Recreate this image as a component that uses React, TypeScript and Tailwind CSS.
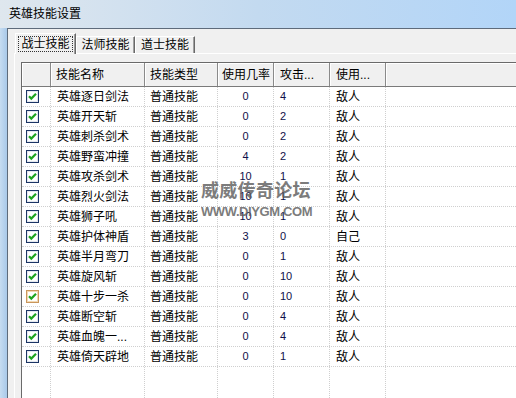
import React from "react";

type Row = {
  name: string;
  type: string;
  rate: string;
  atk: string;
  target: string;
  hot?: boolean;
};

const rows: Row[] = [
  { name: "英雄逐日剑法", type: "普通技能", rate: "0", atk: "4", target: "敌人" },
  { name: "英雄开天斩", type: "普通技能", rate: "0", atk: "2", target: "敌人" },
  { name: "英雄刺杀剑术", type: "普通技能", rate: "0", atk: "2", target: "敌人" },
  { name: "英雄野蛮冲撞", type: "普通技能", rate: "4", atk: "2", target: "敌人" },
  { name: "英雄攻杀剑术", type: "普通技能", rate: "10", atk: "1", target: "敌人" },
  { name: "英雄烈火剑法", type: "普通技能", rate: "10", atk: "1", target: "敌人" },
  { name: "英雄狮子吼", type: "普通技能", rate: "10", atk: "1", target: "敌人" },
  { name: "英雄护体神盾", type: "普通技能", rate: "3", atk: "0", target: "自己" },
  { name: "英雄半月弯刀", type: "普通技能", rate: "0", atk: "1", target: "敌人" },
  { name: "英雄旋风斩", type: "普通技能", rate: "0", atk: "10", target: "敌人" },
  { name: "英雄十步一杀", type: "普通技能", rate: "0", atk: "10", target: "敌人", hot: true },
  { name: "英雄断空斩", type: "普通技能", rate: "0", atk: "4", target: "敌人" },
  { name: "英雄血魄一...", type: "普通技能", rate: "0", atk: "4", target: "敌人" },
  { name: "英雄倚天辟地", type: "普通技能", rate: "0", atk: "1", target: "敌人" },
];

function CheckBox({ hot }: { hot?: boolean }) {
  return (
    <svg width="13" height="13" viewBox="0 0 13 13" className="shrink-0">
      <rect x="0.5" y="0.5" width="12" height="12" fill="#fff" stroke={hot ? "#c9965c" : "#1c3565"} />
      <rect x="1.5" y="1.5" width="10" height="10" fill="none" stroke={hot ? "#f3d9b2" : "#e4e8ef"} />
      <polyline points="3,6.2 5.3,8.6 10,3.8" fill="none" stroke="#1fa51f" strokeWidth="2.2" />
    </svg>
  );
}

const headerCell =
  "h-full flex items-center border-r border-[#8a8a8a] shadow-[inset_1px_1px_0_#ffffff] bg-[#f0f0f0] overflow-hidden whitespace-nowrap";
const cell = "h-full flex items-center border-r border-dotted border-[#cfcfcf] overflow-hidden whitespace-nowrap";

export default function App() {
  return (
    <div className="relative w-[516px] h-[398px] overflow-hidden flex flex-col bg-[#b8d5f0] font-['Liberation_Sans','Noto_Sans_CJK_SC',sans-serif] text-[12px] text-black">
      {/* title bar */}
      <div className="h-[28px] shrink-0 flex items-center pl-[9px] bg-gradient-to-r from-[#dfe7ee] via-[#c3daf0] to-[#b2d5f8]">
        <span className="leading-none">英雄技能设置</span>
      </div>

      <div className="flex flex-1 min-h-0">
        <div className="w-[7px] shrink-0 bg-gradient-to-r from-[#c6dcf1] to-[#a9c9e9]" />
        <div className="flex-1 flex flex-col min-h-0 bg-[#f0f0f0] border-l border-t border-[#5e6b7b]">
          {/* tabs */}
          <div className="h-[24px] shrink-0 flex items-end pl-[7px] pt-[4px]">
            <div className="relative z-10 -mb-px h-[21px] w-[61px] bg-[#f0f0f0] border-t border-l border-white border-r border-r-[#696969] shadow-[inset_-1px_0_0_#a0a0a0] flex items-center justify-center">
              <span className="px-[2px] py-[1px] leading-none outline outline-1 outline-dotted outline-[#333]">战士技能</span>
            </div>
            <div className="h-[17px] w-[59px] border-t border-l border-white border-r border-r-[#696969] shadow-[inset_-1px_0_0_#a0a0a0] flex items-center justify-center">
              <span className="leading-none">法师技能</span>
            </div>
            <div className="h-[17px] w-[60px] border-t border-l border-white border-r border-r-[#696969] shadow-[inset_-1px_0_0_#a0a0a0] flex items-center justify-center">
              <span className="leading-none">道士技能</span>
            </div>
          </div>

          {/* pane */}
          <div className="flex-1 min-h-0 ml-[6px] border-l border-t border-white pt-[8px] pl-[6px] flex flex-col">
            <div className="flex-1 min-h-0 flex flex-col bg-white border-l border-t border-[#6a6a6a]">
              {/* header */}
              <div className="h-[24px] shrink-0 flex border-b border-[#7a7a7a]">
                <div className={`${headerCell} w-[29px]`} />
                <div className={`${headerCell} w-[94px] pl-[5px]`}>技能名称</div>
                <div className={`${headerCell} w-[73px] pl-[5px]`}>技能类型</div>
                <div className={`${headerCell} w-[56px] pl-[4px]`}>使用几率</div>
                <div className={`${headerCell} w-[56px] pl-[6px]`}>攻击...</div>
                <div className={`${headerCell} w-[56px] pl-[6px]`}>使用...</div>
                <div className="flex-1 h-full bg-[#f0f0f0] shadow-[inset_1px_1px_0_#ffffff]" />
              </div>

              {rows.map((r, i) => (
                <div key={i} className="h-[20px] shrink-0 flex border-b border-dotted border-[#cfcfcf]">
                  <div className={`${cell} w-[29px] pl-[4px]`}>
                    <CheckBox hot={r.hot} />
                  </div>
                  <div className={`${cell} w-[94px] pl-[6px]`}>{r.name}</div>
                  <div className={`${cell} w-[73px] pl-[5px]`}>{r.type}</div>
                  <div className={`${cell} w-[56px] justify-center text-[11px] text-[#10104a]`}>{r.rate}</div>
                  <div className={`${cell} w-[56px] pl-[6px] text-[11px] text-[#10104a]`}>{r.atk}</div>
                  <div className={`${cell} w-[56px] pl-[6px]`}>{r.target}</div>
                  <div className="flex-1" />
                </div>
              ))}

              <div className="flex-1 flex">
                <div className={`${cell} w-[29px]`} />
                <div className={`${cell} w-[94px]`} />
                <div className={`${cell} w-[73px]`} />
                <div className={`${cell} w-[56px]`} />
                <div className={`${cell} w-[56px]`} />
                <div className={`${cell} w-[56px]`} />
                <div className="flex-1" />
              </div>
            </div>
          </div>
        </div>
      </div>

      {/* watermark */}
      <div className="absolute left-[201px] top-[181px] flex flex-col pointer-events-none opacity-80">
        <span className="text-[18px] font-bold leading-[20px] tracking-[0.3px] text-[#5c5c5c]">威威传奇论坛</span>
        <span className="mt-[4px] text-[13px] font-bold leading-[13px] tracking-[-0.4px] text-[#5c5c5c]">WWW.DIYGM.COM</span>
      </div>
    </div>
  );
}
